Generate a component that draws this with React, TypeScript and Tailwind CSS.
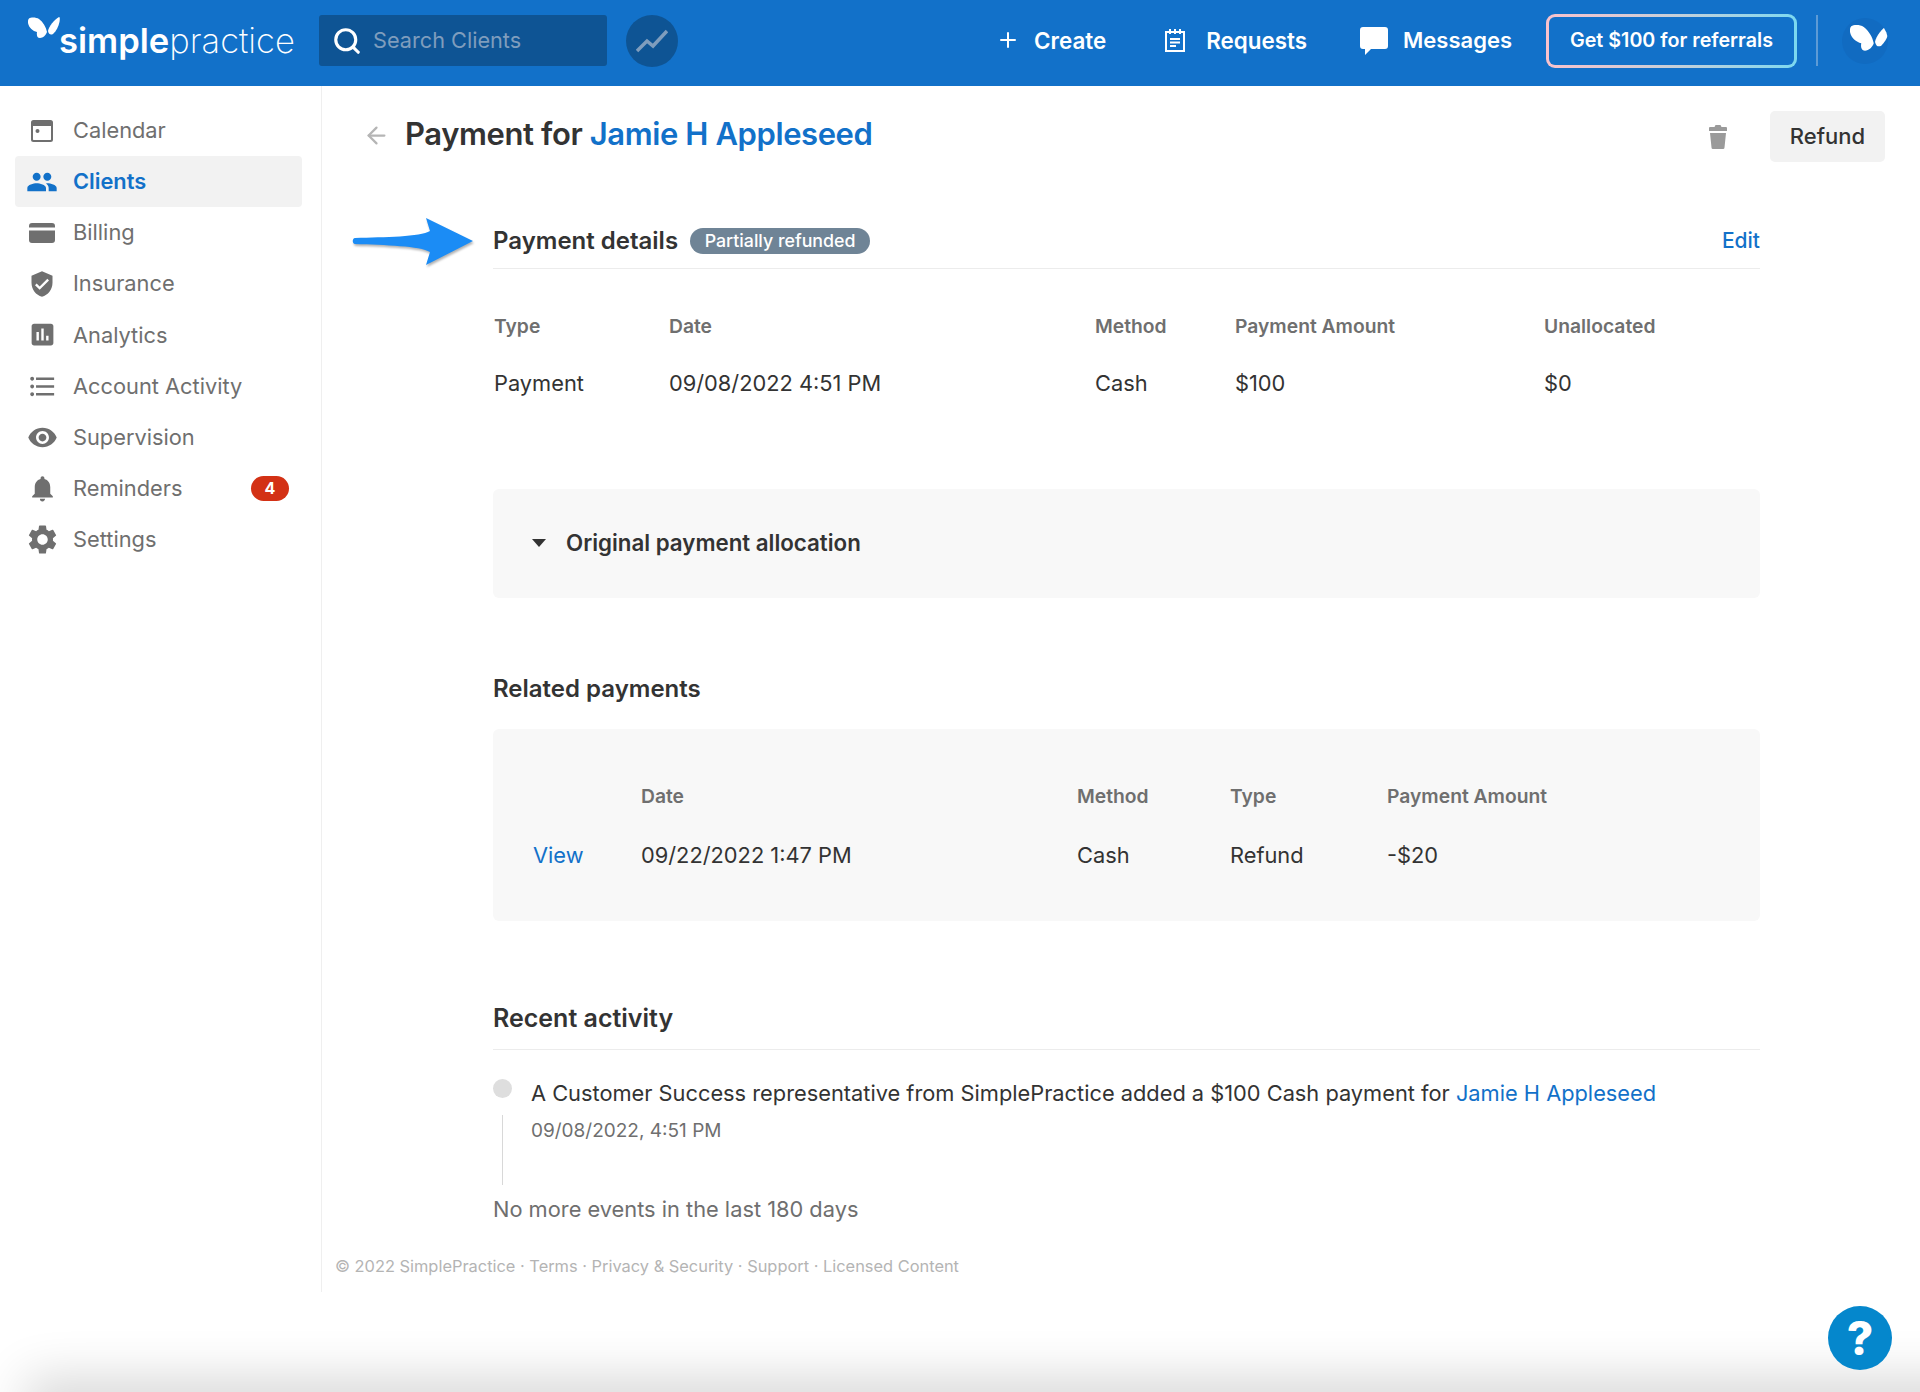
import { ArrowLeft, Plus, Search } from "lucide-react"
import { MdAssessment, MdFormatListBulleted, MdNotifications, MdPeople, MdSettings, MdVerifiedUser, MdVisibility } from "react-icons/md"

const Butterfly = ({ className }: { className: string }) => (
  <svg viewBox="0 0 32 21" className={className} fill="currentColor">
    <path d="M1 1.500C3 0 8 0 11 2c4 3 7 8 8 13-1 3-4 6-7 6-3 0-3.500-3-3-6C5 14 1 11 0 6c-.2-2 0-3.500 1-4.500z" />
    <path d="M20 14c1-5 6-11 11-14 1 0 1 2 .5 5-1 4-3 9-6.500 12-2 1-4 1-5-3z" />
  </svg>
)

const CalendarIcon = () => (
  <svg viewBox="0 0 24 24" className="w-[24px] h-[24px]" fill="currentColor">
    <path fillRule="evenodd" d="M3.500 1h17A2.500 2.500 0 0 1 23 3.500v17a2.500 2.500 0 0 1-2.500 2.500h-17A2.500 2.500 0 0 1 1 20.500v-17A2.500 2.500 0 0 1 3.500 1zM3 7v13.500c0 .3.200.500.500.500h17c.3 0 .500-.200.500-.500V7H3z" />
    <circle cx="7.500" cy="12" r="2" />
  </svg>
)

const BillingIcon = () => (
  <svg viewBox="0 0 26 20" className="w-[26px] h-[20px]" fill="currentColor">
    <path d="M3 0h20a3 3 0 0 1 3 3v1.500H0V3a3 3 0 0 1 3-3zM0 7.500h26V17a3 3 0 0 1-3 3H3a3 3 0 0 1-3-3V7.500z" />
  </svg>
)

const navItems = [
  { label: "Calendar", icon: <CalendarIcon /> },
  { label: "Clients", icon: <MdPeople className="w-[32px] h-[32px]" />, active: true },
  { label: "Billing", icon: <BillingIcon /> },
  { label: "Insurance", icon: <MdVerifiedUser className="w-[28px] h-[28px]" /> },
  { label: "Analytics", icon: <MdAssessment className="w-[29px] h-[29px]" /> },
  { label: "Account Activity", icon: <MdFormatListBulleted className="w-[31px] h-[31px]" /> },
  { label: "Supervision", icon: <MdVisibility className="w-[31px] h-[31px]" /> },
  { label: "Reminders", icon: <MdNotifications className="w-[31px] h-[31px]" />, badge: "4" },
  { label: "Settings", icon: <MdSettings className="w-[35px] h-[35px]" /> },
]

function Header() {
  return (
    <header className="h-[86px] shrink-0 bg-[#1271c9] flex items-center pb-[5px] text-white">
      <div className="w-[319px] pl-[28px] flex items-start shrink-0">
        <Butterfly className="w-[32px] h-[21px] -mt-[4px]" />
        <span className="text-[34.600px] leading-[40px] -ml-[1px] mt-[-1px]">
          <span className="font-semibold">simple</span>
          <span className="font-extralight">practice</span>
        </span>
      </div>
      <div className="w-[288px] h-[51px] rounded-[3px] bg-[#0e5494] flex items-center pl-[13px] gap-[11px]">
        <Search className="w-[30px] h-[30px]" strokeWidth={2.500} />
        <span className="text-[21.700px] text-[#7f9dbd]">Search Clients</span>
      </div>
      <div className="w-[52px] h-[52px] ml-[19px] rounded-full bg-[#0e5494] flex items-center justify-center">
        <svg viewBox="0 0 32 24" className="w-[32px] h-[24px]" fill="none" stroke="#7f9dbd" strokeWidth="3.500">
          <path d="M1 22l10-10 6 5L31 2" />
        </svg>
      </div>
      <div className="flex-1 flex items-center justify-end font-semibold text-[22.400px]">
        <div className="flex items-center gap-[14px] mr-[58px]">
          <Plus className="w-[24px] h-[24px]" strokeWidth={2} />
          <span>Create</span>
        </div>
        <div className="flex items-center gap-[20px] mr-[53px]">
          <svg viewBox="0 0 22 24" className="w-[22px] h-[24px]" fill="none" stroke="currentColor" strokeWidth="2">
            <path d="M2 4h18v19H2zM6 1v5M11 1v5M16 1v5" />
            <path d="M6 11h10M6 14.500h10M6 18h6" />
          </svg>
          <span>Requests</span>
        </div>
        <div className="flex items-center gap-[15px] mr-[34px]">
          <svg viewBox="0 0 28 28" className="w-[28px] h-[28px]" fill="currentColor">
            <path d="M3 0h22a3 3 0 0 1 3 3v16a3 3 0 0 1-3 3H11l-6 6v-6H3a3 3 0 0 1-3-3V3a3 3 0 0 1 3-3z" />
          </svg>
          <span className="text-[22px]">Messages</span>
        </div>
        <div className="w-[251px] h-[54px] mt-[1px] rounded-[9px] p-[3px] bg-gradient-to-r from-[#f9c2cc] via-[#c8cfd8] to-[#7ad8f0]">
          <div className="w-full h-full rounded-[6px] bg-[#1271c9] flex items-center justify-center text-[19.700px]">
            Get $100 for referrals
          </div>
        </div>
        <div className="w-[2px] h-[51px] bg-[#5d9bd6] ml-[19px] mr-[24px]" />
        <div className="w-[46px] h-[46px] mr-[32px] rounded-full bg-[#116bc1] overflow-hidden">
          <Butterfly className="w-[40px] h-[27px] ml-[8px] mt-[6px]" />
        </div>
      </div>
    </header>
  )
}

function Sidebar() {
  return (
    <aside className="w-[322px] shrink-0 border-r border-[#efefef] pl-[15px] pr-[19px] pt-[19px]">
      {navItems.map((item) => (
        <div
          key={item.label}
          className={`h-[51.100px] flex items-center rounded-[4px] text-[21.800px] ${item.active ? "bg-[#f2f2f2] text-[#1271c9] font-semibold" : "text-[#6f6f6f]"}`}
        >
          <span className="w-[54px] mr-[4px] flex justify-center shrink-0">{item.icon}</span>
          <span className="flex-1">{item.label}</span>
          {item.badge && (
            <span className="w-[38px] h-[25px] mr-[13px] rounded-full bg-[#d33115] text-white text-[16px] font-bold flex items-center justify-center">
              {item.badge}
            </span>
          )}
        </div>
      ))}
    </aside>
  )
}

function Main() {
  return (
    <main className="flex-1 min-w-0 relative text-[#333333]">
      <div className="flex items-center h-[51px] mt-[25px] ml-[41px] mr-[35px]">
        <ArrowLeft className="w-[27px] h-[27px] text-[#b5b5b5] mr-[15px] -mt-[2px]" strokeWidth={2} />
        <h1 className="text-[31px] font-semibold tracking-[-0.4px] -mt-[5px]">
          Payment for <span className="text-[#1271c9]">Jamie H Appleseed</span>
        </h1>
        <svg viewBox="0 0 18 24" className="w-[18px] h-[24px] ml-auto mr-[43px] text-[#9a9a9a]" fill="currentColor">
          <path d="M6.500 0h5l1 2h4.500a1 1 0 0 1 1 1v3H0V3a1 1 0 0 1 1-1h4.500zM1 8h16l-1.500 14.500a1.500 1.500 0 0 1-1.500 1.500H4a1.500 1.500 0 0 1-1.500-1.500z" />
        </svg>
        <button className="w-[115px] h-[51px] rounded-[5px] bg-[#f2f2f2] text-[22px] font-medium">Refund</button>
      </div>

      <div className="ml-[171px] w-[1267px]">
        <section className="mt-[59px] border-b border-[#ececec] h-[48px] flex items-start">
          <h2 className="text-[24px] leading-[40px] font-semibold">Payment details</h2>
          <span className="ml-[12px] mt-[7px] h-[26px] w-[180px] rounded-full bg-[#6f8496] text-white text-[17.800px] font-medium flex items-center justify-center">
            Partially refunded
          </span>
          <a className="ml-auto text-[21px] leading-[40px] font-medium text-[#1271c9]">Edit</a>
        </section>

        <div className="grid grid-cols-[175px_426px_140px_309px_1fr] pl-[1px] mt-[43px] text-[19.300px] font-semibold text-[#6f6f6f]">
          <span>Type</span>
          <span>Date</span>
          <span>Method</span>
          <span>Payment Amount</span>
          <span>Unallocated</span>
        </div>
        <div className="grid grid-cols-[175px_426px_140px_309px_1fr] pl-[1px] mt-[26px] text-[21.800px]">
          <span>Payment</span>
          <span>09/08/2022 4:51 PM</span>
          <span>Cash</span>
          <span>$100</span>
          <span>$0</span>
        </div>

        <section className="mt-[89px] h-[109px] rounded-[6px] bg-[#f8f8f8] flex items-center pl-[39px]">
          <span className="w-0 h-0 border-x-[7px] border-x-transparent border-t-[8px] border-t-[#333333]" />
          <span className="ml-[20px] text-[22.300px] font-semibold">Original payment allocation</span>
        </section>

        <h2 className="mt-[71px] text-[24px] leading-[40px] font-semibold">Related payments</h2>
        <section className="mt-[20px] h-[192px] rounded-[6px] bg-[#f8f8f8] pl-[40px] pt-[53px]">
          <div className="grid grid-cols-[108px_436px_153px_157px_1fr] text-[19.300px] font-semibold text-[#6f6f6f]">
            <span />
            <span>Date</span>
            <span>Method</span>
            <span>Type</span>
            <span>Payment Amount</span>
          </div>
          <div className="grid grid-cols-[108px_436px_153px_157px_1fr] mt-[28px] text-[21.800px]">
            <a className="text-[#1271c9]">View</a>
            <span>09/22/2022 1:47 PM</span>
            <span>Cash</span>
            <span>Refund</span>
            <span>-$20</span>
          </div>
        </section>

        <h2 className="mt-[77px] text-[25px] leading-[40px] font-semibold">Recent activity</h2>
        <div className="mt-[11px] border-t border-[#ececec] pt-[29px] flex">
          <div className="w-[38px] shrink-0 flex flex-col items-start">
            <span className="w-[19px] h-[19px] rounded-full bg-[#dedede]" />
            <span className="w-px h-[70px] bg-[#d8d8d8] ml-[9px] mt-[17px]" />
          </div>
          <div>
            <p className="text-[21.800px] leading-[28px]">
              A Customer Success representative from SimplePractice added a $100 Cash payment for{" "}
              <span className="text-[#1271c9]">Jamie H Appleseed</span>
            </p>
            <p className="mt-[10px] text-[19px] text-[#6f6f6f]">09/08/2022, 4:51 PM</p>
          </div>
        </div>
        <p className="mt-[8px] text-[21.800px] text-[#6f6f6f]">No more events in the last 180 days</p>
      </div>

      <footer className="mt-[29px] ml-[13px] text-[16.400px] text-[#b4b4b4]">
        © 2022 SimplePractice · Terms · Privacy &amp; Security · Support · Licensed Content
      </footer>
    </main>
  )
}

export default function App() {
  return (
    <div className="relative w-[1920px] h-[1392px] overflow-hidden bg-white flex flex-col font-['Inter',sans-serif]">
      <Header />
      <div className="h-[1206px] shrink-0 flex">
        <Sidebar />
        <Main />
      </div>

      {/* soft shadow that the window drops along the bottom edge */}
      <div className="absolute left-[40px] -right-[100px] top-[1392px] h-[30px] shadow-[0_0_50px_14px_rgba(0,0,0,0.16)]" />

      {/* annotation arrow over the page */}
      <svg viewBox="0 0 126 58" className="absolute left-[350px] top-[214px] w-[126px] h-[58px] drop-shadow-[1px_2px_1px_rgba(0,0,0,0.3)]">
        <path fill="#1b8cf5" d="M5 24C35 23 70 23 80 17L76 4l47 23-47 24 4-13C70 32 35 31 5 30c-3 0-3-6 0-6z" />
      </svg>

      <div className="absolute left-[1828px] top-[1306px] w-[64px] h-[64px] rounded-full bg-[#0587cc] text-white text-[46px] font-extrabold flex items-center justify-center">
        ?
      </div>
    </div>
  )
}
